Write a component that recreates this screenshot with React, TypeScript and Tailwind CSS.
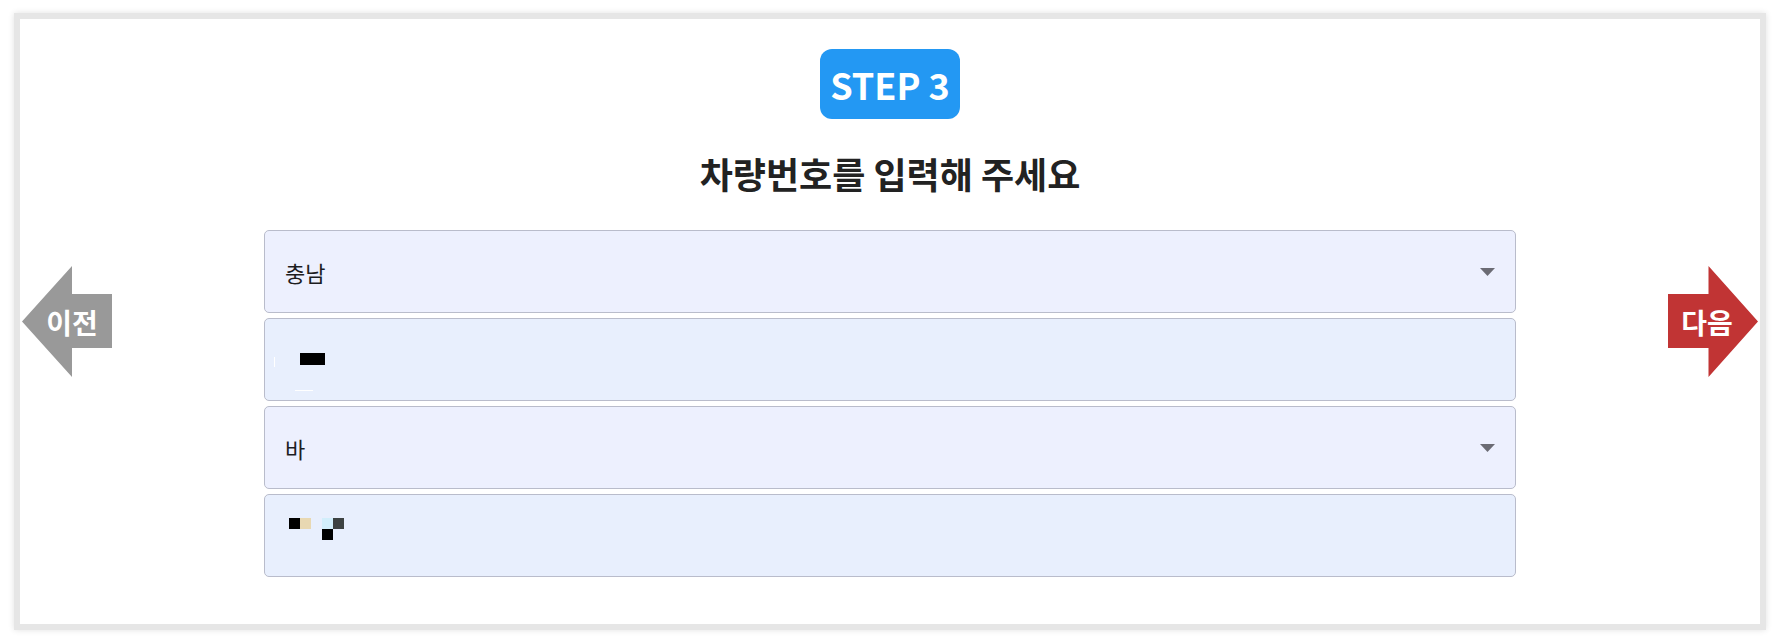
import React from "react";

const font = { fontFamily: '"Noto Sans CJK KR", "Noto Sans", sans-serif' };

function Caret() {
  return (
    <svg width="15" height="8" viewBox="0 0 15 8" className="shrink-0">
      <polygon points="0,0 15,0 7.5,8" fill="#6b6b74" />
    </svg>
  );
}

function SelectField({ value }: { value: string }) {
  return (
    <div className="h-[83px] w-full rounded-[5px] border border-[#b9bccb] bg-[#edf0fe] flex items-center justify-between pl-[20px] pr-[20px]">
      <span className="text-[22px] text-[#1d1d1f] leading-none">{value}</span>
      <Caret />
    </div>
  );
}

export default function App() {
  return (
    <div className="w-[1773px] h-[640px] bg-white pt-[13px] pl-[14px]" style={font}>
      <div className="w-[1752px] h-[617px] border-[6px] border-[#e6e6e6] bg-white shadow-[0_0_6px_rgba(0,0,0,0.12)] flex flex-col items-center">
        <div className="mt-[30px] w-[140px] h-[70px] rounded-[12px] bg-[#2398f3] flex items-center justify-center text-white font-bold text-[36px] leading-none">
          STEP 3
        </div>
        <h1 className="mt-[27px] text-[36px] leading-[1.5] font-bold text-[#222222]">
          차량번호를 입력해 주세요
        </h1>
        <div className="mt-[30px] w-full px-[2px] flex items-start justify-between">
          <div className="relative mt-[36px] w-[90px] h-[111px]">
            <svg width="90" height="111" viewBox="0 0 90 111" className="absolute inset-0">
              <polygon points="0,55.5 50,0 50,28 90,28 90,82 50,82 50,111" fill="#999999" />
            </svg>
            <div className="absolute inset-0 flex items-center justify-center pl-[10px] text-white font-bold text-[28px] leading-none">
              이전
            </div>
          </div>

          <div className="w-[1252px] flex flex-col gap-[5px]">
            <SelectField value="충남" />
            <div className="relative h-[83px] w-full rounded-[5px] border border-[#b9bccb] bg-[#e8effd]">
              <div className="absolute left-[35px] top-[34px] w-[25px] h-[12px] bg-black" />
              <div className="absolute left-[9px] top-[38px] w-[1px] h-[10px] bg-white" />
              <div className="absolute left-[30px] top-[71px] w-[18px] h-[1px] bg-white" />
            </div>
            <SelectField value="바" />
            <div className="relative h-[83px] w-full rounded-[5px] border border-[#b9bccb] bg-[#e8effd]">
              <div className="absolute left-[24px] top-[23px] w-[11px] h-[11px] bg-black" />
              <div className="absolute left-[35px] top-[23px] w-[11px] h-[11px] bg-[#e8d8b2]" />
              <div className="absolute left-[57px] top-[23px] w-[11px] h-[11px] bg-[#d2eefb]" />
              <div className="absolute left-[68px] top-[23px] w-[11px] h-[11px] bg-[#3d4242]" />
              <div className="absolute left-[57px] top-[34px] w-[11px] h-[11px] bg-black" />
            </div>
          </div>

          <div className="relative mt-[36px] w-[90px] h-[111px]">
            <svg width="90" height="111" viewBox="0 0 90 111" className="absolute inset-0">
              <polygon points="0,28 40.5,28 40.5,0 90,55.5 40.5,111 40.5,82 0,82" fill="#c13434" />
            </svg>
            <div className="absolute inset-0 flex items-center justify-center pr-[12px] text-white font-bold text-[28px] leading-none">
              다음
            </div>
          </div>
        </div>
      </div>
    </div>
  );
}
